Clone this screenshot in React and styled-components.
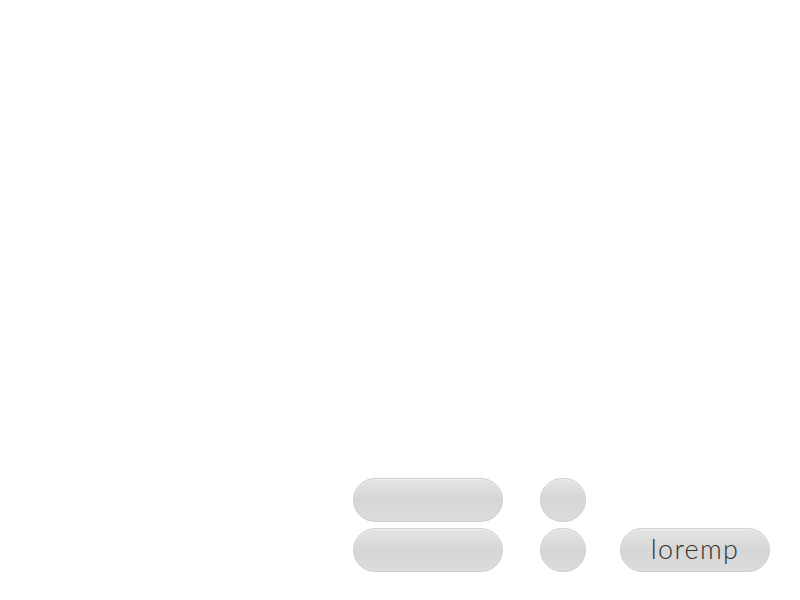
import styled, { createGlobalStyle } from "styled-components";

const GlobalStyle = createGlobalStyle`
  html, body {
    margin: 0;
    padding: 0;
    background: #ffffff;
  }
  body {
    font-family: "Lato", "DejaVu Sans", sans-serif;
  }
`;

const Page = styled.div`
  width: 800px;
  height: 600px;
  display: flex;
  align-items: flex-end;
  justify-content: flex-end;
  padding: 0 30px 28px 0;
  box-sizing: border-box;
`;

const Controls = styled.div`
  display: grid;
  grid-template-columns: 150px 37px 46px 34px 150px;
  grid-template-rows: 44px 44px;
  row-gap: 6px;
`;

const Key = styled.button`
  box-sizing: border-box;
  width: ${(p) => (p.$round ? "46px" : "150px")};
  height: 44px;
  border-radius: 22px;
  border: 1px solid #cfcfcf;
  background: linear-gradient(#e4e4e4 0%, #d6d6d6 50%, #dcdcdc 100%);
  box-shadow: inset 0 1px 0 rgba(255, 255, 255, 0.4);
  padding: 0 0 4px;
  margin: 0;
  grid-column: ${(p) => p.$col};
  grid-row: ${(p) => p.$row};
  font-family: "Lato", "DejaVu Sans", sans-serif;
  font-weight: 300;
  font-size: 27px;
  letter-spacing: 1.3px;
  color: #333333;
  display: flex;
  align-items: center;
  justify-content: center;
  line-height: 1;
`;

function App() {
  return (
    <>
      <GlobalStyle />
      <Page>
        <Controls>
          <Key $col={1} $row={1} />
          <Key $col={3} $row={1} $round />
          <Key $col={1} $row={2} />
          <Key $col={3} $row={2} $round />
          <Key $col={5} $row={2}>loremp</Key>
        </Controls>
      </Page>
    </>
  );
}

export default App;
